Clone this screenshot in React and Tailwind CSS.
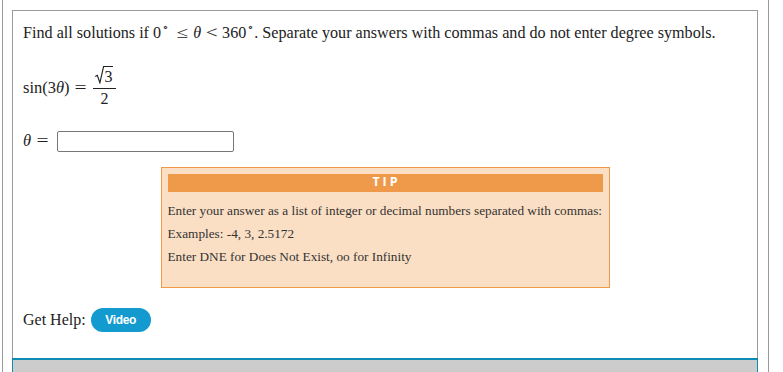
import React from "react";

const serif = { fontFamily: '"Liberation Serif", "Times New Roman", serif' };

function Deg() {
  return <span className="relative top-[-7px] text-[11px] ml-[1px]">∘</span>;
}

function Rel({ children }) {
  return (
    <span className="inline-block w-[13px] mx-[4px] text-center">
      <span className="inline-block scale-x-[1.3]">{children}</span>
    </span>
  );
}

export default function App() {
  return (
    <div className="w-[783px] h-[372px] overflow-hidden bg-white text-[#222]" style={serif}>
      <div className="ml-[2px] w-[767px] h-[372px] border-x border-[#9a9a9a] pt-[10px]">
        <div className="ml-[9px] w-[746px] border-t border-x border-[#9a9a9a] px-[10px] pt-[13px] pb-[26px]">
          <p className="text-[16.15px] leading-[18px] whitespace-nowrap">
            Find all solutions if{" "}
            <span className="inline-flex items-baseline">
              <span>0</span>
              <Deg />
              <span className="ml-[3px]">
                <Rel>≤</Rel>
              </span>
              <span className="italic">θ</span>
              <Rel>&lt;</Rel>
              <span>360</span>
              <Deg />
            </span>
            . Separate your answers with commas and do not enter degree symbols.
          </p>

          <div className="mt-[23px] h-[45px] flex items-center text-[16.5px]">
            <span>
              sin(3<span className="italic">θ</span>)
            </span>
            <span className="ml-[6px] mr-[8px] inline-block scale-x-[1.3]">=</span>
            <span className="flex flex-col items-center w-[23px]">
              <span className="h-[22px] flex items-end pb-[4px]">
                <svg width="9" height="18" viewBox="0 0 9 18" className="block">
                  <path
                    d="M0.3 10.6 L2.3 9.3 L4.9 16.8 L8.6 0.5 L9 0.5"
                    fill="none"
                    stroke="#222"
                    strokeWidth="1.15"
                  />
                </svg>
                <span className="h-[18px] border-t border-[#222] flex items-end leading-[14px] text-[16px] pr-[1px]">
                  3
                </span>
              </span>
              <span className="h-px w-full bg-[#222]" />
              <span className="h-[22px] leading-[20px] text-[16px]">2</span>
            </span>
          </div>

          <div className="mt-[18px] flex items-center">
            <span className="italic text-[16.5px]">θ</span>
            <span className="ml-[7px] text-[16.5px] inline-block scale-x-[1.3]">=</span>
            <input
              type="text"
              className="ml-[10px] w-[177px] h-[21px] border border-[#777] rounded-[2px] bg-white outline-none"
            />
          </div>

          <div className="mt-[13px] mx-auto w-[449px] h-[121px] border border-[#f09a48] bg-[#fbdfc4] p-[6px]">
            <div
              className="h-[18px] bg-[#ef9a4a] text-white text-[12.5px] font-bold tracking-[3px] pl-[3px] flex items-center justify-center"
              style={{ fontFamily: '"Open Sans", "Liberation Sans", sans-serif' }}
            >
              TIP
            </div>
            <div className="mt-[7px] text-[13.25px] text-[#333]">
              <div className="h-[23px] leading-[23px] whitespace-nowrap">
                Enter your answer as a list of integer or decimal numbers separated with commas:
              </div>
              <div className="h-[23px] leading-[23px]">Examples: -4, 3, 2.5172</div>
              <div className="h-[23px] leading-[23px]">Enter DNE for Does Not Exist, oo for Infinity</div>
            </div>
          </div>

          <div className="mt-[20px] flex items-center">
            <span className="text-[16px]">Get Help:</span>
            <button
              className="ml-[5px] w-[60px] h-[24px] rounded-full bg-[#139bd0] text-white text-[12px] font-bold tracking-[-0.3px]"
              style={{ fontFamily: '"Liberation Sans", Arial, sans-serif' }}
            >
              Video
            </button>
          </div>
        </div>
        <div className="ml-[9px] w-[746px] h-[30px] border-t-2 border-x border-[#0e8bb3] bg-[#cccccc]" />
      </div>
    </div>
  );
}
